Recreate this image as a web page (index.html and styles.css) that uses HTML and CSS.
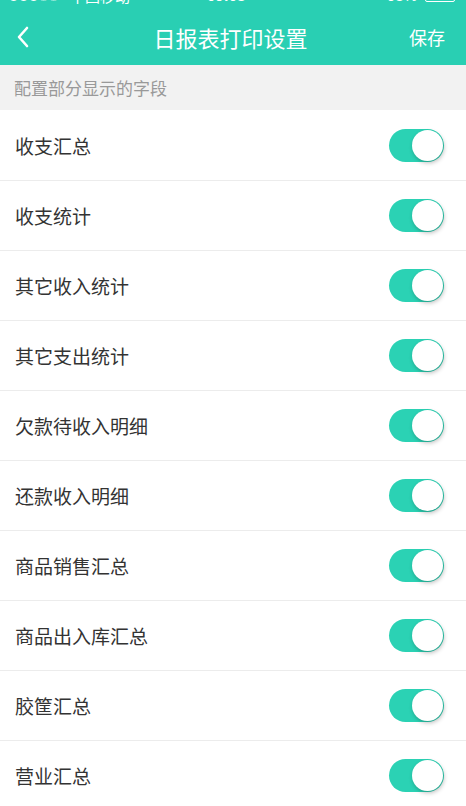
FILE: index.html
```html
<!DOCTYPE html>
<html lang="zh-CN">
<head>
    <meta charset="UTF-8">
    <title>日报表打印设置</title>
    <link rel="stylesheet" href="styles.css">
</head>
<body>
    <div class="top">
        <div class="status">
            <span class="signal">●●●○○</span>
            <span class="carrier">中国移动</span>
            <span class="wifi">◆</span>
            <span class="time">09:08</span>
            <span class="spacer"></span>
            <span class="battery">98%</span>
            <span class="batteryIcon"><span class="batteryFill"></span></span>
        </div>
        <div class="navbar">
            <span class="back">
                <svg width="14" height="22" viewBox="0 0 14 22">
                    <path d="M11 2 L3 11 L11 20" fill="none" stroke="#ffffff" stroke-width="2.6" stroke-linecap="round" stroke-linejoin="round"/>
                </svg>
            </span>
            <h1 class="title">日报表打印设置</h1>
            <span class="save">保存</span>
        </div>
    </div>
    <div class="section">配置部分显示的字段</div>
    <div class="list">
        <div class="row"><span class="label">收支汇总</span><span class="toggle"><span class="knob"></span></span></div>
        <div class="row"><span class="label">收支统计</span><span class="toggle"><span class="knob"></span></span></div>
        <div class="row"><span class="label">其它收入统计</span><span class="toggle"><span class="knob"></span></span></div>
        <div class="row"><span class="label">其它支出统计</span><span class="toggle"><span class="knob"></span></span></div>
        <div class="row"><span class="label">欠款待收入明细</span><span class="toggle"><span class="knob"></span></span></div>
        <div class="row"><span class="label">还款收入明细</span><span class="toggle"><span class="knob"></span></span></div>
        <div class="row"><span class="label">商品销售汇总</span><span class="toggle"><span class="knob"></span></span></div>
        <div class="row"><span class="label">商品出入库汇总</span><span class="toggle"><span class="knob"></span></span></div>
        <div class="row"><span class="label">胶筐汇总</span><span class="toggle"><span class="knob"></span></span></div>
        <div class="row"><span class="label">营业汇总</span><span class="toggle"><span class="knob"></span></span></div>
    </div>
</body>
</html>
```

FILE: styles.css
```css
html, body {
    margin: 0;
    padding: 0;
}
body {
    background-color: #ffffff;
    font-family: "Noto Sans CJK SC", "Noto Sans", sans-serif;
    overflow: hidden;
}
.top {
    background-color: #29cfb3;
    height: 65px;
    overflow: hidden;
}
.status {
    align-items: center;
    color: #ffffff;
    display: flex;
    font-size: 15px;
    height: 20px;
    margin-top: -15px;
    padding: 0 11px 0 8px;
}
.signal {
    font-size: 11px;
    letter-spacing: -1px;
}
.carrier {
    margin-left: 12px;
}
.wifi {
    font-size: 9px;
    margin-left: 10px;
}
.time {
    font-family: "Liberation Sans", sans-serif;
    font-weight: bold;
    margin-left: 58px;
}
.spacer {
    flex: 1;
}
.battery {
    font-family: "Liberation Sans", sans-serif;
}
.batteryIcon {
    border: 1px solid #ffffff;
    border-radius: 2px;
    height: 9px;
    margin-left: 8px;
    padding: 1px;
    width: 26px;
}
.batteryFill {
    background-color: #ffffff;
    display: block;
    height: 100%;
}
.navbar {
    align-items: center;
    display: flex;
    height: 32px;
    margin-top: 16px;
    padding: 0 21px 0 16px;
}
.back {
    display: flex;
    width: 60px;
}
.title {
    color: #ffffff;
    flex: 1;
    font-size: 22px;
    font-weight: normal;
    margin: 0;
    text-align: center;
}
.save {
    color: #ffffff;
    font-size: 18px;
    text-align: right;
    width: 60px;
}
.section {
    background-color: #f2f2f2;
    color: #999999;
    font-size: 17px;
    height: 45px;
    line-height: 46px;
    padding-left: 14px;
}
.list {
    padding-top: 1px;
}
.row {
    align-items: center;
    border-bottom: 1px solid #ececec;
    box-sizing: border-box;
    display: flex;
    height: 70px;
    justify-content: space-between;
    padding: 0 22px 0 15px;
}
.label {
    color: #333333;
    font-size: 19px;
}
.toggle {
    background-color: #2bd2b4;
    border-radius: 17px;
    height: 33px;
    position: relative;
    width: 55px;
}
.knob {
    background-color: #ffffff;
    border-radius: 50%;
    box-shadow: 1px 2px 4px rgba(0, 0, 0, 0.25);
    height: 31px;
    position: absolute;
    right: 1px;
    top: 1px;
    width: 31px;
}
```
